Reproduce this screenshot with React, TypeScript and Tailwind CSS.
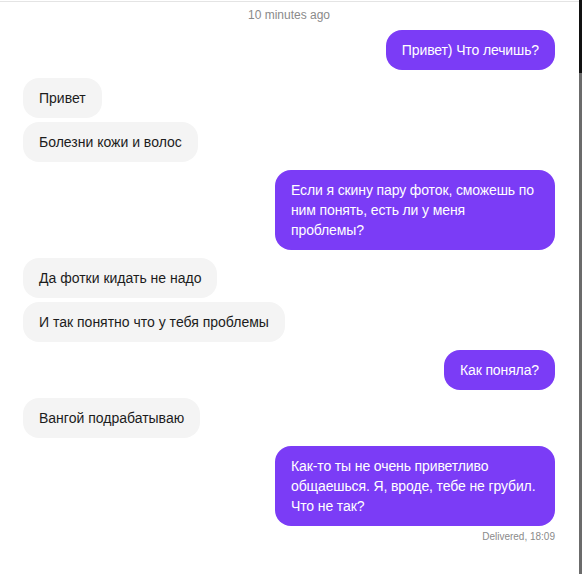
import React from "react";

type Msg = { id: number; me: boolean; text: string };

const messages: Msg[] = [
  { id: 1, me: true, text: "Привет) Что лечишь?" },
  { id: 2, me: false, text: "Привет" },
  { id: 3, me: false, text: "Болезни кожи и волос" },
  { id: 4, me: true, text: "Если я скину пару фоток, сможешь по ним понять, есть ли у меня проблемы?" },
  { id: 5, me: false, text: "Да фотки кидать не надо" },
  { id: 6, me: false, text: "И так понятно что у тебя проблемы" },
  { id: 7, me: true, text: "Как поняла?" },
  { id: 8, me: false, text: "Вангой подрабатываю" },
  { id: 9, me: true, text: "Как-то ты не очень приветливо общаешься. Я, вроде, тебе не грубил. Что не так?" },
];

function Bubble({ msg, first }: { msg: Msg; first: boolean }) {
  return (
    <div className={`flex ${msg.me ? "justify-end" : "justify-start"} ${first ? "" : "mt-2"}`}>
      <div
        className={`max-w-[280px] rounded-2xl px-4 py-2.5 text-sm leading-5 ${
          msg.me ? "bg-[#7b3cf6] text-white tracking-[-0.12px]" : "bg-[#f4f4f4] text-[#1c1c1c]"
        }`}
      >
        {msg.text}
      </div>
    </div>
  );
}

export default function App() {
  return (
    <div
      className="flex w-[582px] h-[574px] bg-white overflow-hidden"
      style={{ fontFamily: "'Liberation Sans', 'Noto Sans', sans-serif" }}
    >
      <div className="flex-1 flex flex-col mt-[1px] border-t border-[#e4e4e4] pl-[23px] pr-[24px]">
        <div className="pt-[5px] mb-[7px] text-center text-xs leading-4 text-[#8a8a8a]">10 minutes ago</div>
        {messages.map((m, i) => {
          const prev = messages[i - 1];
          const sameSender = prev && prev.me === m.me;
          return (
            <div key={m.id} className={sameSender ? "-mt-1" : ""}>
              <Bubble msg={m} first={i === 0} />
            </div>
          );
        })}
        <div className="mt-1 text-right text-[10px] leading-[14px] text-[#8a8a8a]">Delivered, 18:09</div>
      </div>
      <div className="w-[3px] flex flex-col">
        <div className="h-[73px] bg-[#111111]" />
        <div className="flex-1 bg-[#6b6b6b]" />
      </div>
    </div>
  );
}
